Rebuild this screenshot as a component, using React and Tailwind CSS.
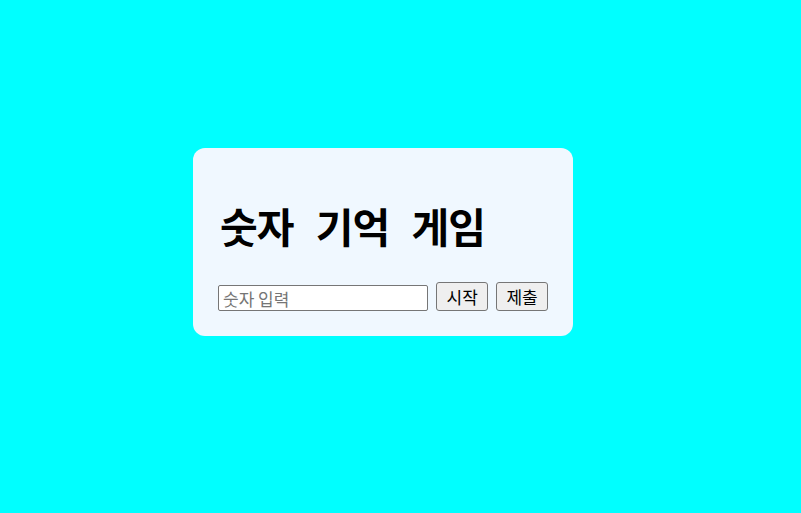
import React, { useState } from 'react';

const App = () => {
    const [value, setValue] = useState('');

    return (
        <div className="w-full h-[513px] bg-[#00ffff] pt-[148px] pl-[193px] font-['Noto_Sans_CJK_KR',sans-serif]">
            <div className="w-[380px] h-[188px] bg-[#f0f8ff] rounded-[12px] px-[25px] pt-[54px]">
                <h1 className="text-[41px] leading-[46px] font-bold text-black [word-spacing:14px] tracking-[-1px] pl-[2px]">숫자 기억 게임</h1>
                <div className="flex items-end mt-[34px]">
                    <input
                        type="text"
                        placeholder="숫자 입력"
                        value={value}
                        onChange={(e) => setValue(e.target.value)}
                        className="w-[211px] h-[26px] bg-white border border-[#767676] rounded-[2px] px-[4px] text-[17px] leading-none placeholder:text-[#757575] outline-none"
                    />
                    <button className="ml-[8px] w-[52px] h-[29px] bg-[#efefef] border border-[#767676] rounded-[3px] text-[17px] leading-none font-normal text-black">시작</button>
                    <button className="ml-[8px] w-[52px] h-[29px] bg-[#efefef] border border-[#767676] rounded-[3px] text-[17px] leading-none font-normal text-black">제출</button>
                </div>
            </div>
        </div>
    );
};

export default App;
